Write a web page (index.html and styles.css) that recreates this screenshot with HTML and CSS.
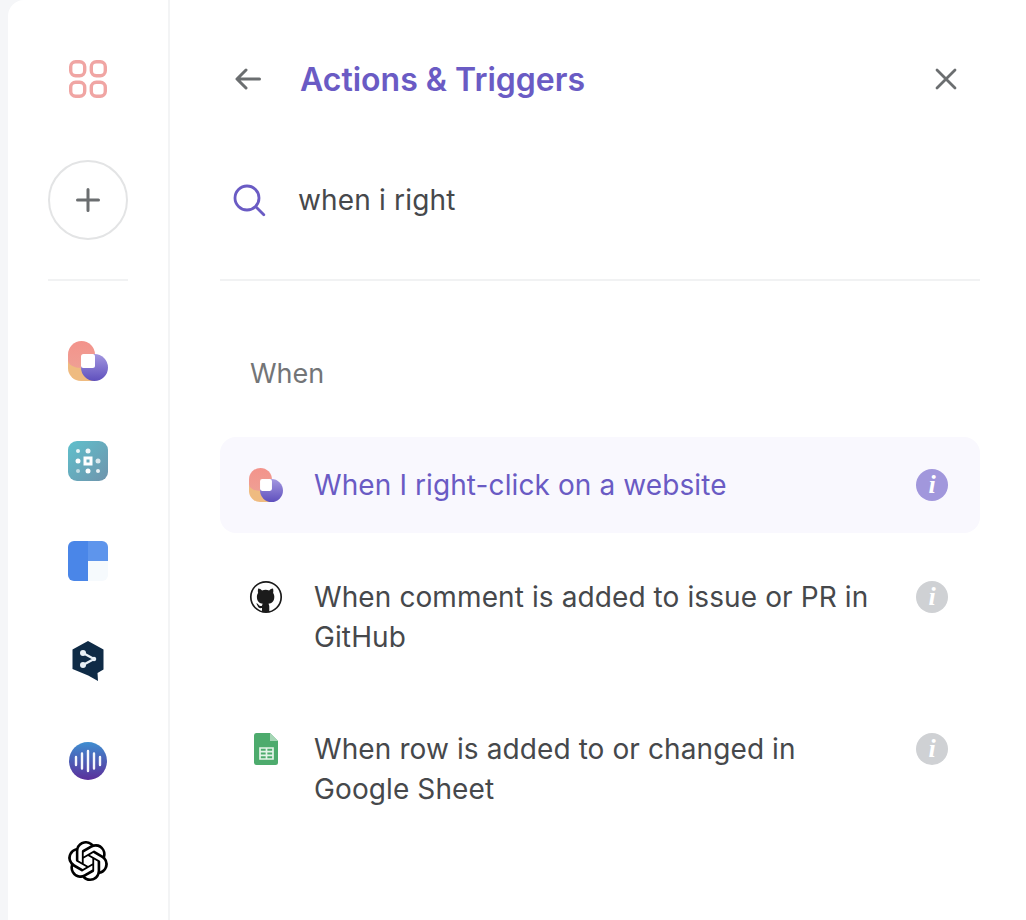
FILE: index.html
```html
<!DOCTYPE html>
<html lang="en">
<head>
<meta charset="utf-8">
<title>Actions &amp; Triggers</title>
<link rel="stylesheet" href="styles.css">
</head>
<body>
<div class="panel">
  <aside class="sidebar">
    <div class="logo-slot">
      <svg class="ic40" viewBox="0 0 40 40" fill="none" stroke="#f0a5a3" stroke-width="3.4">
        <rect x="2.7" y="2.7" width="14" height="14" rx="5"/><rect x="23.3" y="2.7" width="14" height="14" rx="5"/>
        <rect x="2.7" y="23.3" width="14" height="14" rx="5"/><rect x="23.3" y="23.3" width="14" height="14" rx="5"/>
      </svg>
    </div>
    <button class="add-btn" aria-label="Add">
      <svg class="ic26" viewBox="0 0 26 26" fill="none" stroke="#6b6e70" stroke-width="3" stroke-linecap="round"><path d="M13 2.500v21M2.500 13h21"/></svg>
    </button>
    <div class="side-rule"></div>
    <div class="apps">
      <svg class="ic40" viewBox="0 0 40 40">
        <defs>
          <linearGradient id="a1" x1="0" y1="0" x2="0" y2="1"><stop offset="0" stop-color="#f3938b"/><stop offset="1" stop-color="#ef9f94"/></linearGradient>
          <linearGradient id="a2" x1="0" y1="0" x2="0" y2="1"><stop offset="0" stop-color="#a397e0"/><stop offset="1" stop-color="#5f50bd"/></linearGradient>
        </defs>
        <path d="M0 13.500H27V40H13A13 13 0 0 1 0 27z" fill="#efbb80"/>
        <path d="M0 13.500a13.500 13.500 0 0 1 27 0V27H13A13 8 0 0 1 0 19z" fill="url(#a1)"/>
        <circle cx="26.500" cy="26.500" r="13.500" fill="url(#a2)"/>
        <rect x="13" y="13" width="14" height="14" rx="2.500" fill="#fff"/>
      </svg>
      <svg class="ic40" viewBox="0 0 40 40">
        <defs><linearGradient id="b1" x1="0" y1="0" x2="1" y2="1"><stop offset="0" stop-color="#5fc0cc"/><stop offset="1" stop-color="#6f94ac"/></linearGradient></defs>
        <rect width="40" height="40" rx="9" fill="url(#b1)"/>
        <g fill="#fff">
          <circle cx="10" cy="10" r="2" opacity=".85"/><circle cx="20" cy="10" r="2.500" opacity=".9"/>
          <circle cx="10" cy="20" r="2.500"/><circle cx="30" cy="20" r="2.500" opacity=".75"/>
          <circle cx="10" cy="30" r="2" opacity=".6"/><circle cx="20" cy="30" r="2.500"/><circle cx="30" cy="30" r="2" opacity=".85"/>
        </g>
        <path fill="#fff" fill-rule="evenodd" d="M15.500 15.500h9v9h-9zM18.500 18.500v3h3v-3z"/>
      </svg>
      <svg class="ic40" viewBox="0 0 40 40">
        <path d="M6 0h14v40H6a6 6 0 0 1-6-6V6a6 6 0 0 1 6-6z" fill="#4a86e8"/>
        <path d="M20 0h14a6 6 0 0 1 6 6v14H20z" fill="#5e95ec"/>
        <path d="M20 20h20v14a6 6 0 0 1-6 6H20z" fill="#f6fafd"/>
      </svg>
      <svg class="ic40" viewBox="0 0 40 40">
        <path d="M20 0l15.500 8.500v20l-6 3.500 .5 8-9.800-5.500L4.500 28V8.500z" fill="#0f2b46"/>
        <g fill="none" stroke="#e8f0f6" stroke-width="2.400"><path d="M15 12L26 18 15 24"/></g>
        <circle cx="15" cy="12" r="3" fill="#e8f0f6"/><circle cx="26" cy="18" r="2.200" fill="#e8f0f6"/><circle cx="15" cy="24" r="3" fill="#e8f0f6"/>
      </svg>
      <svg class="ic40" viewBox="0 0 40 40">
        <defs><linearGradient id="d1" x1="0" y1="0" x2="0" y2="1"><stop offset="0" stop-color="#3f8ed0"/><stop offset="1" stop-color="#5b2f9b"/></linearGradient></defs>
        <circle cx="20" cy="20" r="19" fill="url(#d1)"/>
        <g stroke="#fff" stroke-width="2.400" stroke-linecap="round" opacity=".95">
          <path d="M8 16v8M14 12.500v15M20 10v20M26 12.500v15M32 16v8"/>
        </g>
      </svg>
      <svg class="ic40" viewBox="0 0 24 24">
        <path fill="#000" d="M22.282 9.821a5.985 5.985 0 0 0-.516-4.910 6.046 6.046 0 0 0-6.510-2.900A6.065 6.065 0 0 0 4.981 4.180a5.985 5.985 0 0 0-3.998 2.900 6.046 6.046 0 0 0 .743 7.097 5.980 5.980 0 0 0 .510 4.911 6.051 6.051 0 0 0 6.515 2.900A5.985 5.985 0 0 0 13.260 24a6.056 6.056 0 0 0 5.772-4.206 5.990 5.990 0 0 0 3.997-2.900 6.056 6.056 0 0 0-.747-7.073zM13.260 22.430a4.476 4.476 0 0 1-2.876-1.040l.141-.081 4.779-2.758a.795.795 0 0 0 .392-.681v-6.737l2.020 1.168a.071.071 0 0 1 .038.052v5.583a4.504 4.504 0 0 1-4.494 4.494zM3.600 18.304a4.470 4.470 0 0 1-.535-3.014l.142.085 4.783 2.759a.771.771 0 0 0 .780 0l5.843-3.369v2.332a.080.080 0 0 1-.033.062L9.740 19.950a4.500 4.500 0 0 1-6.140-1.646zM2.340 7.896a4.485 4.485 0 0 1 2.366-1.973V11.600a.766.766 0 0 0 .388.676l5.815 3.355-2.020 1.168a.076.076 0 0 1-.071 0l-4.830-2.786A4.504 4.504 0 0 1 2.340 7.872zm16.597 3.855l-5.833-3.387L15.119 7.200a.076.076 0 0 1 .071 0l4.830 2.791a4.494 4.494 0 0 1-.676 8.105v-5.678a.790.790 0 0 0-.407-.667zm2.010-3.023l-.141-.085-4.774-2.782a.776.776 0 0 0-.785 0L9.409 9.229V6.897a.066.066 0 0 1 .028-.061l4.830-2.787a4.500 4.500 0 0 1 6.680 4.660zm-12.640 4.135l-2.020-1.164a.080.080 0 0 1-.038-.057V6.075a4.500 4.500 0 0 1 7.375-3.453l-.142.080L8.704 5.460a.795.795 0 0 0-.393.681zm1.097-2.365l2.602-1.500 2.607 1.500v2.999l-2.597 1.500-2.607-1.500z"/>
      </svg>
    </div>
  </aside>
  <main class="main">
    <header class="top">
      <svg class="ic28" viewBox="0 0 28 28" fill="none" stroke="#6b6e70" stroke-width="3" stroke-linecap="round" stroke-linejoin="round"><path d="M25.500 14H3.500M12 5l-9 9 9 9"/></svg>
      <h1 class="title">Actions &amp; Triggers</h1>
      <svg class="ic28 close" viewBox="0 0 28 28" fill="none" stroke="#6b6e70" stroke-width="2.800" stroke-linecap="round"><path d="M5 5l18 18M23 5L5 23"/></svg>
    </header>
    <div class="search">
      <svg class="ic34" viewBox="0 0 34 34" fill="none" stroke="#6a5bc4" stroke-width="2.800" stroke-linecap="round"><circle cx="15" cy="15" r="12"/><path d="M23.800 23.800l8 8"/></svg>
      <span class="query">when i right</span>
    </div>
    <section class="results">
      <h2 class="group">When</h2>
      <div class="list">
        <div class="row active">
          <svg class="ic34" viewBox="0 0 40 40">
            <path d="M0 13.500H27V40H13A13 13 0 0 1 0 27z" fill="#efbb80"/>
            <path d="M0 13.500a13.500 13.500 0 0 1 27 0V27H13A13 8 0 0 1 0 19z" fill="url(#a1)"/>
            <circle cx="26.500" cy="26.500" r="13.500" fill="url(#a2)"/>
            <rect x="13" y="13" width="14" height="14" rx="2.500" fill="#fff"/>
          </svg>
          <span class="label">When I right-click on a website</span>
          <span class="info">i</span>
        </div>
        <div class="row">
          <svg class="ic34" viewBox="0 0 34 34">
            <circle cx="17" cy="17" r="15.200" fill="#fff" stroke="#1b1b1b" stroke-width="1.700"/>
            <path fill="#1b1b1b" transform="translate(2 0) scale(.88 1)" d="M12.500 32v-4c-3 .6-4.500-.8-5.200-2.600-.4-1-1-1.500-1.500-1.900 1.200-.4 2.300.3 3 1.400.7 1.100 2 1.400 3.700.8.100-.9.500-1.500.9-1.900-3.500-.5-6.700-2-6.700-7 0-1.500.5-2.800 1.400-3.800-.2-.5-.6-2.200.1-4.400 1.500-.1 3.100.9 4.400 1.800a14 14 0 0 1 8 0c1.300-.9 2.900-1.900 4.400-1.800.7 2.200.3 3.900.1 4.400.9 1 1.400 2.300 1.400 3.800 0 5-3.200 6.500-6.700 7 .6.600 1 1.500 1 2.800V32z"/>
          </svg>
          <span class="label">When comment is added to issue or PR in GitHub</span>
          <span class="info">i</span>
        </div>
        <div class="row">
          <svg class="ic34" viewBox="0 0 34 34">
            <path d="M7.500 1H21l8 8v21.500a2.500 2.500 0 0 1-2.500 2.500h-19A2.500 2.500 0 0 1 5 30.500v-27A2.500 2.500 0 0 1 7.500 1z" fill="#4dab6d"/>
            <path d="M21 1l8 8h-8z" fill="#a5d6b5"/>
            <path d="M11 16h13v11H11z" fill="none" stroke="#e3f3e8" stroke-width="1.700"/>
            <path d="M11 19.700h13M11 23.400h13M17.500 16v11" stroke="#e3f3e8" stroke-width="1.700"/>
          </svg>
          <span class="label">When row is added to or changed in Google Sheet</span>
          <span class="info">i</span>
        </div>
      </div>
    </section>
  </main>
</div>
</body>
</html>
```

FILE: styles.css
```css
* { box-sizing: border-box; }
html, body { margin: 0; height: 100%; }
body {
  background: #f5f6f8;
  font-family: Inter, "Liberation Sans", sans-serif;
  color: #46484b;
  overflow: hidden;
}
.panel {
  margin-left: 8px;
  height: 920px;
  background: #fff;
  border-top-left-radius: 16px;
  display: flex;
}
.sidebar {
  width: 162px;
  flex: none;
  border-right: 2px solid #f3f4f5;
  display: flex;
  flex-direction: column;
  align-items: center;
  padding-top: 59px;
}
.logo-slot { height: 40px; }
.ic40 { width: 40px; height: 40px; display: block; flex: none; }
.ic34 { width: 34px; height: 34px; display: block; flex: none; }
.ic28 { width: 28px; height: 28px; display: block; flex: none; }
.ic26 { width: 26px; height: 26px; display: block; }
.add-btn {
  margin-top: 61px;
  width: 80px;
  height: 80px;
  border-radius: 50%;
  border: 2px solid #e3e4e5;
  background: #fff;
  padding: 0;
  display: flex;
  align-items: center;
  justify-content: center;
}
.side-rule {
  margin-top: 39px;
  width: 80px;
  height: 2px;
  background: #f1f2f3;
}
.apps {
  margin-top: 60px;
  display: flex;
  flex-direction: column;
  gap: 60px;
}
.main {
  flex: 1;
  padding: 0 46px 0 50px;
  min-width: 0;
}
.top {
  height: 158px;
  display: flex;
  align-items: center;
  padding-left: 14px;
  padding-right: 20px;
}
.title {
  margin: 0 0 0 38px;
  flex: 1;
  font-size: 32px;
  font-weight: 600;
  color: #6a5bc4;
}
.search {
  height: 123px;
  padding: 0 0 38px 12px;
  display: flex;
  align-items: center;
  gap: 32px;
  border-bottom: 2px solid #f1f2f3;
}
.query { font-size: 28px; letter-spacing: .17px; color: #46484b; }
.results { padding-top: 73px; }
.group {
  margin: 0 0 43px 30px;
  font-size: 27px;
  line-height: 40px;
  font-weight: 400;
  color: #737577;
}
.list { display: flex; flex-direction: column; gap: 16px; }
.row {
  display: flex;
  align-items: flex-start;
  gap: 31px;
  padding: 28px 32px 28px 29px;
  border-radius: 16px;
}
.row .ic34 { margin-top: 3px; }
.row.active { background: #f9f8fe; }
.row.active .label { color: #6a5bc4; }
.label {
  flex: 1;
  font-size: 28px;
  line-height: 40px;
  letter-spacing: .1px;
  color: #46484b;
}
.info {
  flex: none;
  width: 32px;
  height: 32px;
  margin-top: 4px;
  border-radius: 50%;
  background: #cfd1d4;
  color: #fff;
  font-family: "Liberation Serif", serif;
  font-style: italic;
  font-weight: 700;
  font-size: 26px;
  line-height: 32px;
  text-align: center;
}
.row.active .info { background: #a197dc; }
```
